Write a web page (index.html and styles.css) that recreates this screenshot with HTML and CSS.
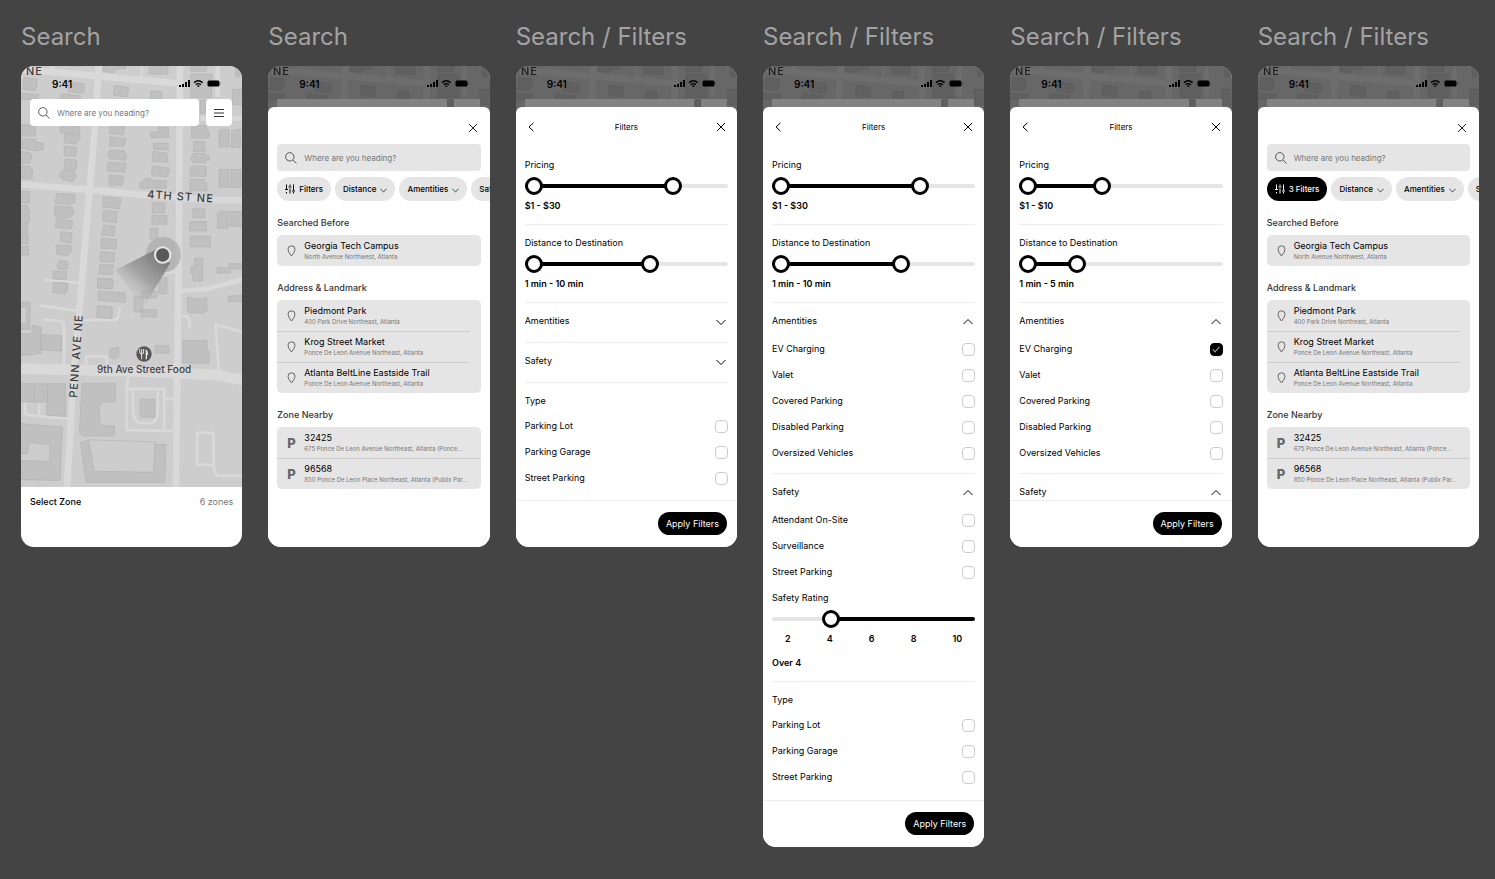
FILE: index.html
```html
<!DOCTYPE html>
<html lang="en">
<head>
  <meta charset="UTF-8">
  <meta name="viewport" content="width=device-width, initial-scale=1.0">
  <title>Parking Search Screens</title>
  <link rel="stylesheet" href="styles.css">
</head>
<body>
  <!-- shared symbols -->
  <svg class="sprite" width="0" height="0" aria-hidden="true">
    <defs>
      <linearGradient id="beam" gradientUnits="userSpaceOnUse" x1="490" y1="765" x2="385" y2="890">
        <stop offset="0" stop-color="#777"/>
        <stop offset="0.55" stop-color="#999" stop-opacity="0.8"/>
        <stop offset="1" stop-color="#bbb" stop-opacity="0"/>
      </linearGradient>
    </defs>
    <symbol id="map" viewBox="0 0 221 421" preserveAspectRatio="xMinYMin slice">
      <rect width="221" height="421" fill="#cdcdcd"/>
      <g transform="translate(-21 -66) scale(0.33333)">
        <g fill="none" stroke="#d9d9d9" stroke-linejoin="round">
          <path stroke-width="20" d="M50 207 300 229 535 250M296 190 285 380 268 570 245 850 222 1110 200 1470M539 190 537 600 534 870 527 1470M50 552 270 569 440 585 640 600H730"/>
          <path stroke-width="32" d="M50 1104 380 1112 530 1118 650 1124 730 1139"/>
          <path stroke-width="14" d="M540 872 622 866 730 836M600 355H730M652 190V290M155 190V212"/>
          <path stroke-width="8" d="M425 190V235M132 838 240 848M118 915 236 932M130 958 185 962Q192 964 192 985V1095M250 960 345 958Q358 958 358 920M498 820 536 812M545 944 560 948Q568 950 569 985M655 1110 646 972 730 996M258 1092V1068H320V1094M384 1130 380 1165V1288L520 1292M384 1165H492V1288M398 1170V1230Q400 1268 425 1268H450Q473 1265 473 1230V1170M492 1195H522M590 1297H640V1393H590ZM640 1393Q642 1425 655 1425H730M75 1205V1240Q80 1246 210 1254M117 1212V1246M50 922H84V966H50"/>
        </g>
        <g fill="#c0c0c0" stroke="#b2b2b2" stroke-width="2">
          <path d="M213 190H248V198H213ZM310 190H376V206L346 208 340 218 310 214ZM447 190H503V222H447ZM572 222H634V292H572ZM573 190H618V214H573ZM706 190H730V230H706ZM697 268H730V314H697ZM600 300H616V340H600Z"/>
          <path d="M72 232 112 238 110 262 104 272 68 268ZM50 278 116 284 112 298H50ZM206 246 252 252V276L242 280 204 274ZM184 280 242 288 240 298H180ZM342 256 386 262 382 290 340 286ZM452 274H484V298H452Z"/>
          <path d="M60 374H106V408H60ZM50 416 106 418 108 426 130 430V448L108 452 50 442ZM50 454 88 456 95 468 90 488 50 492ZM50 498H90L98 512 96 536H50Z"/>
          <path d="M190 372V382H180V398L238 402V380ZM194 402 242 406 236 420 228 432 192 428ZM194 438 230 442 226 470 192 466ZM196 476 230 480V506L216 512 192 506ZM190 510 222 514 228 532 218 545 192 540 178 530 182 516Z"/>
          <path d="M330 376 374 380 370 404 328 400ZM330 410 378 416 372 438 328 438ZM330 450 372 452 380 466 376 480 328 476 322 462ZM324 486 378 490 374 516 322 512ZM328 524 370 528 366 556 342 554 336 561 326 554Z"/>
          <path d="M474 382H504L506 412H452V396H474ZM460 430H504V448H460ZM458 454 500 458 504 486 456 484ZM456 498 508 504 506 520 500 530 454 526ZM432 536H450V540L498 542V564H420V546H430Z"/>
          <path d="M574 376H614L626 396V414H574ZM580 424H614V454H580ZM580 460H616V466H626V480H616V488H580L570 476ZM574 498H618V528H570V504ZM570 538H612L614 548H620V572H568Z"/>
          <path d="M656 394 662 388H686V440H656ZM694 392 706 388H720V442H692ZM656 508H686V562H656ZM692 508H722V562H692ZM652 638 660 633H684V684H652ZM690 634H730V678H690ZM650 802H686V790H730V806H690V818H650ZM684 888 730 884V904H684Z"/>
          <path d="M50 574H88V608H50ZM50 616H80L90 630 86 642 90 660 84 672H50ZM50 674 84 678 80 696H50ZM50 700H84V730H50ZM50 738H86V764H50Z"/>
          <path d="M170 580 224 582V608L200 614 166 608ZM164 618 216 620 222 636 212 652 176 656 164 646ZM168 658 218 662 214 686 166 682ZM182 694 216 698 214 728 180 724ZM168 734 212 736 214 754 202 766 170 762ZM178 780 202 784V806L176 808 170 796ZM160 812 200 814 198 838 158 836ZM160 848H202V870H160Z"/>
          <path d="M310 590 362 594 358 626 308 620ZM310 630 352 634 348 668 308 662ZM312 674 344 678 342 708 304 704ZM304 714 350 718 346 746 302 744ZM302 754 344 758 342 786 300 784ZM300 792 340 794 336 824 296 820ZM294 834 338 836 334 866 292 862Z"/>
          <path d="M456 608H494V638H456ZM456 646H500V672H454ZM450 684H472V716H450ZM476 832H500V880H476ZM578 625H614V652H578ZM568 664H618V692H568ZM570 708H630V740H570ZM582 774H608V842H578V820H572V800H582Z"/>
          <path d="M160 846 196 848 202 862 196 882 158 876ZM292 834 340 840 336 866 292 862ZM294 872 376 878V906L294 900ZM292 916 336 920V956L290 950ZM402 888H428V935H402ZM425 872H470V892H425ZM424 928H470V950H424ZM562 892H574L580 896H610V892H620V934H610V938H568L562 930Z"/>
          <path d="M465 1036H506V1058H465ZM330 1046 356 1040V1068L344 1076 328 1070ZM548 1020H620V1052H626V1088H548ZM50 1000H96V975L124 980V1058L96 1062 50 1066ZM124 1002 184 1006V1052L122 1048ZM421 1196H464V1250H421ZM50 905H90V987H50ZM50 922V966H80V922Z" fill-rule="evenodd"/>
          <path d="M50 1150H196V1248L140 1244V1204H50ZM102 1150V1204M142 1150V1204"/>
          <path d="M246 1148H346V1204H308L298 1216V1266L308 1276H343V1306H248L238 1296Z"/>
          <path d="M50 1268 187 1280 180 1440 50 1436V1380L148 1382 150 1332 88 1326 82 1360H50Z"/>
          <path d="M241 1326 266 1318 464 1324V1332H497L494 1445H258ZM266 1318 282 1412 460 1415 464 1324"/>
        </g>
      </g>
      <text class="map-label" x="5" y="9">NE</text>
    </symbol>
    <symbol id="signal" viewBox="0 0 43 8">
      <path d="M0 5h2v2H0ZM3 4h2v3H3ZM6 2h2v5H6ZM9 0h2v7H9Z"/>
      <path fill="none" stroke="#000" stroke-width="1.4" d="M15 2.6Q19.300 -1 23.600 2.600M16.700 4.600Q19.300 2.600 21.900 4.600"/>
      <path d="M19.300 7.300 17.800 5.800Q19.300 4.700 20.800 5.800ZM30 0.500h9q1.500 0 1.500 1.500v3q0 1.500 -1.500 1.500h-9q-1.500 0 -1.500 -1.500v-3q0 -1.500 1.500 -1.500ZM41.200 2.500v2q1 -1 0 -2Z"/>
    </symbol>
    <symbol id="lens" viewBox="0 0 12 12"><path d="M8 8 11.500 11.500M9 4.800A4.200 4.200 0 1 1 0.600 4.800 4.200 4.200 0 0 1 9 4.800Z"/></symbol>
    <symbol id="menu" viewBox="0 0 10 10"><path d="M0 1.500H10M0 5H10M0 8.500H10"/></symbol>
    <symbol id="close" viewBox="0 0 10 10"><path d="M1 1 9 9M9 1 1 9"/></symbol>
    <symbol id="back" viewBox="0 0 10 10"><path d="M6.500 0.800 2 5 6.500 9.200"/></symbol>
    <symbol id="down" viewBox="0 0 10 10"><path d="M0.500 4 5 8.500 9.500 4"/></symbol>
    <symbol id="up" viewBox="0 0 10 10"><path d="M0.500 8 5 3.500 9.500 8"/></symbol>
    <symbol id="sliders" viewBox="0 0 10 10"><path d="M1.500 0.500V5.500M1.500 8V9.500M0 5.500H3M5 0.500V2M5 4.500V9.500M3.500 3H6.500M8.500 0.500V6.500M8.500 8V9.500M7 7H10"/></symbol>
    <symbol id="pin" viewBox="0 0 9 12"><path d="M4.500 11Q1 7 1 4.300A3.500 3.500 0 0 1 8 4.300Q8 7 4.500 11Z"/></symbol>
  </svg>

  <main class="board">
    <section class="screen">
      <h2>Search</h2>
      <div class="phone">
        <div class="map-view">
          <svg class="map">
            <use href="#map"/>
            <g transform="translate(-21 -66) scale(0.33333)">
              <circle cx="490" cy="764" r="53" fill="#aaa" fill-opacity="0.7"/>
              <path d="M470 748 346 810 430 925 510 790Z" fill="url(#beam)"/>
              <circle cx="488" cy="765" r="23" fill="#595959" stroke="#e6e6e6" stroke-width="6"/>
              <circle cx="432" cy="1062" r="23" fill="#555"/>
              <path fill="none" stroke="#e6e6e6" stroke-width="3" d="M419 1047V1056Q419 1062 425 1062T431 1056V1047M425 1047V1078"/>
              <path fill="#e6e6e6" d="M437 1078V1047Q445 1052 444 1065H441V1078Z"/>
            </g>
            <text class="map-label" x="126" y="132" transform="rotate(4 126 132)">4TH ST NE</text>
            <text class="map-label" x="56" y="332" transform="rotate(-86 56 332)">PENN AVE NE</text>
            <text class="map-place" x="123" y="307" text-anchor="middle">9th Ave Street Food</text>
          </svg>
          <div class="status"><span>9:41</span><svg class="signal"><use href="#signal"/></svg></div>
          <div class="map-search">
            <label class="search white"><svg class="icon lens"><use href="#lens"/></svg><input type="text" aria-label="Destination" placeholder="Where are you heading?"></label>
            <button class="menu" aria-label="Menu"><svg class="icon"><use href="#menu"/></svg></button>
          </div>
        </div>
        <div class="zones"><strong>Select Zone</strong><span>6 zones</span></div>
      </div>
    </section>

    <section class="screen">
      <h2>Search</h2>
      <div class="phone">
        <div class="backdrop">
          <svg class="map"><use href="#map"/></svg>
          <div class="status"><span>9:41</span><svg class="signal"><use href="#signal"/></svg></div>
          <div class="map-search"><div class="stub wide"></div><div class="stub"></div></div>
        </div>
        <div class="sheet">
          <header class="search-head"><button aria-label="Close"><svg class="icon"><use href="#close"/></svg></button></header>
          <label class="search"><svg class="icon lens"><use href="#lens"/></svg><input type="text" aria-label="Destination" placeholder="Where are you heading?"></label>
          <div class="chips">
            <button class="chip"><svg class="icon"><use href="#sliders"/></svg>Filters</button>
            <button class="chip">Distance<svg class="icon caret"><use href="#down"/></svg></button>
            <button class="chip">Amentities<svg class="icon caret"><use href="#down"/></svg></button>
            <button class="chip">Safety<svg class="icon caret"><use href="#down"/></svg></button>
          </div>
          <h3>Searched Before</h3>
          <ul class="places">
            <li><svg class="icon pin"><use href="#pin"/></svg><div><b>Georgia Tech Campus</b><small>North Avenue Northwest, Atlanta</small></div></li>
          </ul>
          <h3>Address &amp; Landmark</h3>
          <ul class="places short-lines">
            <li><svg class="icon pin"><use href="#pin"/></svg><div><b>Piedmont Park</b><small>400 Park Drive Northeast, Atlanta</small></div></li>
            <li><svg class="icon pin"><use href="#pin"/></svg><div><b>Krog Street Market</b><small>Ponce De Leon Avenue Northeast, Atlanta</small></div></li>
            <li><svg class="icon pin"><use href="#pin"/></svg><div><b>Atlanta BeltLine Eastside Trail</b><small>Ponce De Leon Avenue Northeast, Atlanta</small></div></li>
          </ul>
          <h3>Zone Nearby</h3>
          <ul class="places">
            <li><i class="p">P</i><div><b>32425</b><small>675 Ponce De Leon Avenue Northeast, Atlanta (Ponce...</small></div></li>
            <li><i class="p">P</i><div><b>96568</b><small>850 Ponce De Leon Place Northeast, Atlanta (Publix Par...</small></div></li>
          </ul>
        </div>
      </div>
    </section>

    <section class="screen">
      <h2>Search / Filters</h2>
      <div class="phone">
        <div class="backdrop">
          <svg class="map"><use href="#map"/></svg>
          <div class="status"><span>9:41</span><svg class="signal"><use href="#signal"/></svg></div>
          <div class="map-search"><div class="stub wide"></div><div class="stub"></div></div>
        </div>
        <div class="sheet">
          <header class="filter-head"><button aria-label="Back"><svg class="icon"><use href="#back"/></svg></button><h3>Filters</h3><button aria-label="Close"><svg class="icon"><use href="#close"/></svg></button></header>
          <div class="groups">
            <div class="group">
              <h4>Pricing</h4>
              <div class="range"><div class="track" style="--from:0%;--to:75%"></div><input type="range" aria-label="Minimum price" value="0"><input type="range" aria-label="Maximum price" value="75"></div>
              <p>$1 - $30</p>
            </div>
            <div class="group">
              <h4>Distance to Destination</h4>
              <div class="range"><div class="track" style="--from:0%;--to:63%"></div><input type="range" aria-label="Minimum distance" value="0"><input type="range" aria-label="Maximum distance" value="63"></div>
              <p>1 min - 10 min</p>
            </div>
            <div class="group closed"><button class="toggle">Amentities<svg class="icon"><use href="#down"/></svg></button></div>
            <div class="group closed"><button class="toggle">Safety<svg class="icon"><use href="#down"/></svg></button></div>
            <div class="group">
              <h4>Type</h4>
              <div class="options type">
                <label>Parking Lot<input type="checkbox"></label>
                <label>Parking Garage<input type="checkbox"></label>
                <label>Street Parking<input type="checkbox"></label>
              </div>
            </div>
          </div>
          <footer><button class="apply">Apply Filters</button></footer>
        </div>
      </div>
    </section>

    <section class="screen">
      <h2>Search / Filters</h2>
      <div class="phone full">
        <div class="backdrop">
          <svg class="map"><use href="#map"/></svg>
          <div class="status"><span>9:41</span><svg class="signal"><use href="#signal"/></svg></div>
          <div class="map-search"><div class="stub wide"></div><div class="stub"></div></div>
        </div>
        <div class="sheet">
          <header class="filter-head"><button aria-label="Back"><svg class="icon"><use href="#back"/></svg></button><h3>Filters</h3><button aria-label="Close"><svg class="icon"><use href="#close"/></svg></button></header>
          <div class="groups">
            <div class="group">
              <h4>Pricing</h4>
              <div class="range"><div class="track" style="--from:0%;--to:75%"></div><input type="range" aria-label="Minimum price" value="0"><input type="range" aria-label="Maximum price" value="75"></div>
              <p>$1 - $30</p>
            </div>
            <div class="group">
              <h4>Distance to Destination</h4>
              <div class="range"><div class="track" style="--from:0%;--to:65%"></div><input type="range" aria-label="Minimum distance" value="0"><input type="range" aria-label="Maximum distance" value="65"></div>
              <p>1 min - 10 min</p>
            </div>
            <div class="group open">
              <button class="toggle">Amentities<svg class="icon"><use href="#up"/></svg></button>
              <div class="options">
                <label>EV Charging<input type="checkbox"></label>
                <label>Valet<input type="checkbox"></label>
                <label>Covered Parking<input type="checkbox"></label>
                <label>Disabled Parking<input type="checkbox"></label>
                <label>Oversized Vehicles<input type="checkbox"></label>
              </div>
            </div>
            <div class="group">
              <button class="toggle">Safety<svg class="icon"><use href="#up"/></svg></button>
              <div class="options">
                <label>Attendant On-Site<input type="checkbox"></label>
                <label>Surveillance<input type="checkbox"></label>
                <label>Street Parking<input type="checkbox"></label>
              </div>
              <h4 class="rating">Safety Rating</h4>
              <div class="range"><div class="track" style="--from:27%;--to:100%"></div><input type="range" aria-label="Safety rating" value="27"></div>
              <div class="ticks"><span>2</span><span>4</span><span>6</span><span>8</span><span>10</span></div>
              <p class="over">Over 4</p>
            </div>
            <div class="group">
              <h4>Type</h4>
              <div class="options type">
                <label>Parking Lot<input type="checkbox"></label>
                <label>Parking Garage<input type="checkbox"></label>
                <label>Street Parking<input type="checkbox"></label>
              </div>
            </div>
          </div>
          <footer><button class="apply">Apply Filters</button></footer>
        </div>
      </div>
    </section>

    <section class="screen">
      <h2>Search / Filters</h2>
      <div class="phone">
        <div class="backdrop">
          <svg class="map"><use href="#map"/></svg>
          <div class="status"><span>9:41</span><svg class="signal"><use href="#signal"/></svg></div>
          <div class="map-search"><div class="stub wide"></div><div class="stub"></div></div>
        </div>
        <div class="sheet">
          <header class="filter-head"><button aria-label="Back"><svg class="icon"><use href="#back"/></svg></button><h3>Filters</h3><button aria-label="Close"><svg class="icon"><use href="#close"/></svg></button></header>
          <div class="groups">
            <div class="group">
              <h4>Pricing</h4>
              <div class="range"><div class="track" style="--from:0%;--to:40%"></div><input type="range" aria-label="Minimum price" value="0"><input type="range" aria-label="Maximum price" value="40"></div>
              <p>$1 - $10</p>
            </div>
            <div class="group">
              <h4>Distance to Destination</h4>
              <div class="range"><div class="track" style="--from:0%;--to:26%"></div><input type="range" aria-label="Minimum distance" value="0"><input type="range" aria-label="Maximum distance" value="26"></div>
              <p>1 min - 5 min</p>
            </div>
            <div class="group open">
              <button class="toggle">Amentities<svg class="icon"><use href="#up"/></svg></button>
              <div class="options">
                <label>EV Charging<input type="checkbox" checked></label>
                <label>Valet<input type="checkbox"></label>
                <label>Covered Parking<input type="checkbox"></label>
                <label>Disabled Parking<input type="checkbox"></label>
                <label>Oversized Vehicles<input type="checkbox"></label>
              </div>
            </div>
            <div class="group"><button class="toggle">Safety<svg class="icon"><use href="#up"/></svg></button></div>
          </div>
          <footer><button class="apply">Apply Filters</button></footer>
        </div>
      </div>
    </section>

    <section class="screen">
      <h2>Search / Filters</h2>
      <div class="phone">
        <div class="backdrop">
          <svg class="map"><use href="#map"/></svg>
          <div class="status"><span>9:41</span><svg class="signal"><use href="#signal"/></svg></div>
          <div class="map-search"><div class="stub wide"></div><div class="stub"></div></div>
        </div>
        <div class="sheet">
          <header class="search-head"><button aria-label="Close"><svg class="icon"><use href="#close"/></svg></button></header>
          <label class="search"><svg class="icon lens"><use href="#lens"/></svg><input type="text" aria-label="Destination" placeholder="Where are you heading?"></label>
          <div class="chips">
            <button class="chip active"><svg class="icon"><use href="#sliders"/></svg>3 Filters</button>
            <button class="chip">Distance<svg class="icon caret"><use href="#down"/></svg></button>
            <button class="chip">Amentities<svg class="icon caret"><use href="#down"/></svg></button>
            <button class="chip">Safety<svg class="icon caret"><use href="#down"/></svg></button>
          </div>
          <h3>Searched Before</h3>
          <ul class="places">
            <li><svg class="icon pin"><use href="#pin"/></svg><div><b>Georgia Tech Campus</b><small>North Avenue Northwest, Atlanta</small></div></li>
          </ul>
          <h3>Address &amp; Landmark</h3>
          <ul class="places short-lines">
            <li><svg class="icon pin"><use href="#pin"/></svg><div><b>Piedmont Park</b><small>400 Park Drive Northeast, Atlanta</small></div></li>
            <li><svg class="icon pin"><use href="#pin"/></svg><div><b>Krog Street Market</b><small>Ponce De Leon Avenue Northeast, Atlanta</small></div></li>
            <li><svg class="icon pin"><use href="#pin"/></svg><div><b>Atlanta BeltLine Eastside Trail</b><small>Ponce De Leon Avenue Northeast, Atlanta</small></div></li>
          </ul>
          <h3>Zone Nearby</h3>
          <ul class="places">
            <li><i class="p">P</i><div><b>32425</b><small>675 Ponce De Leon Avenue Northeast, Atlanta (Ponce...</small></div></li>
            <li><i class="p">P</i><div><b>96568</b><small>850 Ponce De Leon Place Northeast, Atlanta (Publix Par...</small></div></li>
          </ul>
        </div>
      </div>
    </section>
  </main>
</body>
</html>
```
FILE: styles.css
```css
* {
  box-sizing: border-box;
}

body {
  margin: 0;
  background-color: #444;
  color: #000;
  font-family: Inter, "Liberation Sans", sans-serif;
  font-size: 9px;
  line-height: 16px;
}

h2, h3, h4, p, ul {
  margin: 0;
  padding: 0;
}

button, input {
  font: inherit;
  color: inherit;
}

button {
  display: flex;
  align-items: center;
  padding: 0;
  border: 0;
  background: none;
}

.sprite {
  position: absolute;
}

.board {
  display: grid;
  grid-template-columns: repeat(6, minmax(0, 1fr));
  align-items: start;
  gap: 26px;
  padding: 22px 16px 32px 21px;
}

.screen h2 {
  margin-bottom: 14px;
  color: #a3a3a3;
  font-size: 24px;
  font-weight: 400;
  line-height: 30px;
  white-space: nowrap;
}

/* phone frame */
.phone {
  display: flex;
  flex-direction: column;
  height: 481px;
  overflow: hidden;
  border-radius: 13px;
  background: #fff;
}

.phone.full {
  height: auto;
}

.map-view {
  position: relative;
  flex: 1;
}

.backdrop {
  position: relative;
  height: 47px;
  flex-shrink: 0;
  overflow: hidden;
  background: #666;
}

.map {
  position: absolute;
  top: 0;
  left: 0;
  width: 100%;
  height: 421px;
}

.backdrop .map {
  filter: brightness(0.5);
}

.map-label {
  fill: #3c3c3c;
  font-size: 11px;
  font-weight: 500;
  letter-spacing: 1px;
}

.map-place {
  fill: #444;
  font-size: 10px;
  font-weight: 500;
}

.status {
  position: relative;
  display: flex;
  justify-content: space-between;
  align-items: center;
  height: 33px;
  padding: 2px 20px 0 31px;
  font-size: 10px;
  font-weight: 600;
}

.signal {
  width: 43px;
  height: 8px;
}

.map-search {
  position: relative;
  display: flex;
  gap: 7px;
  padding: 0 10px 0 9px;
}

.stub {
  width: 26px;
  height: 27px;
  background: #828282;
}

.stub.wide {
  flex: 1;
}

.zones {
  display: flex;
  justify-content: space-between;
  height: 60px;
  padding: 7px 9px;
}

.zones strong {
  font-weight: 500;
}

.zones span {
  color: #777;
}

/* icons */
.icon {
  width: 10px;
  height: 10px;
  flex-shrink: 0;
  fill: none;
  stroke: currentColor;
  stroke-width: 1;
}

.icon.lens {
  width: 12px;
  height: 12px;
}

.icon.pin {
  width: 9px;
  height: 12px;
  margin: 0 8px 0 10px;
  color: #666;
}

.icon.caret {
  width: 7px;
  height: 7px;
}

/* search */
.search {
  display: flex;
  align-items: center;
  gap: 7px;
  flex-shrink: 0;
  height: 27px;
  padding: 0 8px;
  border-radius: 4px;
  background: #e5e5e5;
  color: #555;
}

.search.white {
  flex: 1;
  min-width: 0;
  background: #fff;
}

.search input {
  flex: 1;
  min-width: 0;
  padding: 0;
  border: 0;
  outline: 0;
  background: none;
  font-size: 8px;
}

.search input::placeholder {
  color: #777;
}

.menu {
  justify-content: center;
  width: 26px;
  height: 27px;
  border-radius: 4px;
  background: #fff;
  color: #333;
}

.sheet {
  position: relative;
  display: flex;
  flex: 1;
  flex-direction: column;
  min-height: 0;
  margin-top: -6px;
  padding: 0 9px;
  border-radius: 6px 6px 0 0;
  background: #fff;
}

.search-head {
  display: flex;
  justify-content: flex-end;
  height: 37px;
  padding: 5px 3px 0 0;
  color: #222;
}

.chips {
  display: flex;
  gap: 4px;
  margin: 6px -9px 0 0;
  overflow: hidden;
}

.chip {
  flex-shrink: 0;
  gap: 4px;
  height: 24px;
  padding: 0 8px;
  border-radius: 12px;
  background: #e5e5e5;
  font-size: 8px;
  font-weight: 500;
}

.chip.active {
  background: #000;
  color: #fff;
}

.sheet > h3 {
  margin: 16px 0 6px;
  color: #333;
  font-size: 9px;
  font-weight: 500;
  line-height: 12px;
}

.places {
  overflow: hidden;
  border-radius: 5px;
  background: #e5e5e5;
  list-style: none;
}

.places li {
  display: flex;
  align-items: center;
  height: 31px;
}

.places li + li {
  background: linear-gradient(#ccc, #ccc) no-repeat 0 0 / 100% 1px;
}

.short-lines li + li {
  background-size: 193px 1px;
}

.places b, .places small {
  display: block;
  white-space: nowrap;
}

.places b {
  font-weight: 400;
  line-height: 12px;
}

.places small {
  color: #777;
  font-size: 6px;
  line-height: 10px;
}

.p {
  width: 27px;
  padding-left: 10px;
  color: #666;
  font-size: 13px;
  font-style: normal;
  font-weight: 800;
}

/* filters */
.filter-head {
  display: flex;
  justify-content: space-between;
  align-items: center;
  flex-shrink: 0;
  height: 40px;
  padding: 0 2px;
}

.filter-head h3 {
  font-size: 8px;
  font-weight: 400;
}

.groups {
  flex: 1;
  min-height: 0;
  overflow: hidden;
}

.group {
  padding: 10px 0;
  border-top: 1px solid #eee;
}

.group:first-child {
  border-top: 0;
}

.group.closed {
  padding-bottom: 13px;
}

.group.open {
  padding-bottom: 7px;
}

.group h4, .toggle {
  font-size: 9px;
  font-weight: 400;
  line-height: 16px;
}

.toggle {
  justify-content: space-between;
  width: 100%;
  padding-right: 2px;
}

.group p, .ticks {
  font-weight: 600;
}

.group p {
  margin-top: 3px;
}

.range {
  display: grid;
  align-items: center;
  height: 18px;
  margin-top: 4px;
}

.range > * {
  grid-area: 1 / 1;
}

.track {
  height: 4px;
  border-radius: 2px;
  background: linear-gradient(90deg, #e5e5e5 var(--from), #000 var(--from) var(--to), #e5e5e5 var(--to));
}

.range input {
  width: 100%;
  height: 18px;
  margin: 0;
  appearance: none;
  background: none;
  pointer-events: none;
}

.range input::-webkit-slider-thumb {
  width: 18px;
  height: 18px;
  appearance: none;
  border: 3px solid #000;
  border-radius: 50%;
  background: #fff;
  pointer-events: auto;
}

.ticks {
  display: flex;
  justify-content: space-between;
  margin-top: 4px;
  padding: 0 13px;
  line-height: 14px;
}

.group .over {
  margin-top: 9px;
}

.options {
  margin-top: 7px;
}

.options.type {
  margin-top: 4px;
}

.options label {
  display: flex;
  justify-content: space-between;
  align-items: center;
  height: 26px;
}

.options input {
  display: grid;
  place-content: center;
  width: 13px;
  height: 13px;
  margin: 0;
  appearance: none;
  border: 1px solid #ccc;
  border-radius: 4px;
}

.options input:checked {
  border-color: #000;
  background: #000;
}

.options input:checked::after {
  width: 3px;
  height: 6px;
  margin-bottom: 2px;
  border: solid #aaa;
  border-width: 0 1px 1px 0;
  content: "";
  transform: rotate(42deg);
}

.rating {
  margin-top: 5px;
}

.sheet footer {
  display: flex;
  justify-content: flex-end;
  flex-shrink: 0;
  margin: 0 -9px;
  padding: 11px 10px 12px;
  border-top: 1px solid #eee;
}

.apply {
  height: 23px;
  padding: 0 8px;
  border-radius: 12px;
  background: #000;
  color: #fff;
}
```
